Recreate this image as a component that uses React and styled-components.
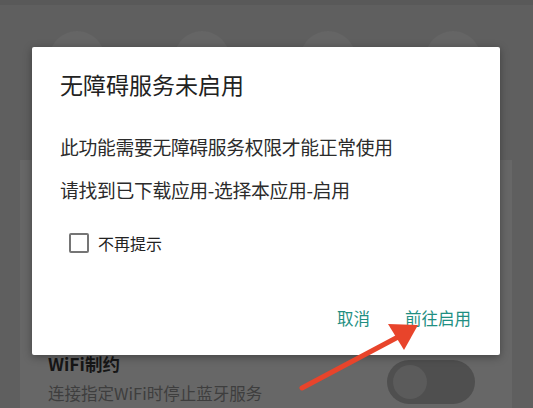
import React from "react";
import styled, { createGlobalStyle } from "styled-components";

const Global = createGlobalStyle`
  html, body { margin: 0; padding: 0; }
  body {
    width: 533px;
    height: 408px;
    overflow: hidden;
    background: #5e5e5e;
    font-family: "Noto Sans CJK SC", "Noto Sans", sans-serif;
  }
`;

const Screen = styled.div`
  position: relative;
  width: 533px;
  height: 408px;
  overflow: hidden;
  background: #5f5f5f;
  display: flex;
  flex-direction: column;
`;

const StatusStrip = styled.div`
  height: 5px;
  background: #595959;
  flex-shrink: 0;
`;

const IconRow = styled.div`
  display: flex;
  justify-content: space-between;
  padding: 26px 52px 0 49px;
  height: 129px;
  flex-shrink: 0;
`;

const FaintCircle = styled.div`
  width: 56px;
  height: 56px;
  border-radius: 50%;
  background: #656565;
`;

const Card = styled.div`
  margin: 0 21px 0 20px;
  flex: 1;
  background: #676767;
  display: flex;
  flex-direction: column;
  justify-content: flex-end;
`;

const SettingRow = styled.div`
  display: flex;
  align-items: center;
  justify-content: space-between;
  padding: 0 37px 5px 28px;
`;

const SettingText = styled.div`
  display: flex;
  flex-direction: column;
  gap: 9px;
`;

const SettingTitle = styled.div`
  font-size: 17.5px;
  line-height: 20px;
  font-weight: 700;
  color: #161616;
`;

const SettingSub = styled.div`
  font-size: 16.5px;
  line-height: 20px;
  color: #3e3e3e;
`;

const Track = styled.div`
  width: 88px;
  height: 44px;
  border-radius: 22px;
  background: #4f4f4f;
  display: flex;
  align-items: center;
  padding-left: 6px;
  box-sizing: border-box;
  margin-bottom: -7px;
`;

const Knob = styled.div`
  width: 34px;
  height: 34px;
  border-radius: 50%;
  background: #5b5b5b;
`;

const Dialog = styled.div`
  position: absolute;
  left: 32px;
  top: 47px;
  width: 468px;
  height: 308px;
  background: #ffffff;
  border-radius: 2px;
  box-shadow: 0 2px 8px rgba(0, 0, 0, 0.35);
  box-sizing: border-box;
  padding: 23px 29px 0 28px;
  display: flex;
  flex-direction: column;
`;

const Title = styled.div`
  font-size: 23px;
  line-height: 28px;
  color: #222222;
`;

const Body = styled.div`
  margin-top: 37px;
  display: flex;
  flex-direction: column;
  gap: 19px;
`;

const Line = styled.div`
  font-size: 18.8px;
  line-height: 24px;
  color: #2b2b2b;
  white-space: nowrap;
  letter-spacing: -0.3px;
`;

const CheckRow = styled.label`
  margin-top: 31px;
  margin-left: 9px;
  display: flex;
  align-items: center;
  gap: 9px;
`;

const Box = styled.span`
  width: 20px;
  height: 20px;
  box-sizing: border-box;
  border: 2px solid #757575;
  border-radius: 2px;
`;

const CheckLabel = styled.span`
  font-size: 16px;
  line-height: 20px;
  color: #222222;
`;

const Actions = styled.div`
  margin-top: 53px;
  display: flex;
  justify-content: flex-end;
  gap: 35px;
`;

const Action = styled.span`
  font-size: 16.5px;
  line-height: 24px;
  color: #1f8f82;
`;

const Arrow = styled.svg`
  position: absolute;
  left: 0;
  top: 0;
  pointer-events: none;
`;

export default function App() {
  return (
    <>
      <Global />
      <Screen>
        <StatusStrip />
        <IconRow>
          <FaintCircle />
          <FaintCircle />
          <FaintCircle />
          <FaintCircle />
        </IconRow>
        <Card>
          <SettingRow>
            <SettingText>
              <SettingTitle>WiFi制约</SettingTitle>
              <SettingSub>连接指定WiFi时停止蓝牙服务</SettingSub>
            </SettingText>
            <Track>
              <Knob />
            </Track>
          </SettingRow>
        </Card>

        <Dialog>
          <Title>无障碍服务未启用</Title>
          <Body>
            <Line>此功能需要无障碍服务权限才能正常使用</Line>
            <Line>请找到已下载应用-选择本应用-启用</Line>
          </Body>
          <CheckRow>
            <Box />
            <CheckLabel>不再提示</CheckLabel>
          </CheckRow>
          <Actions>
            <Action>取消</Action>
            <Action>前往启用</Action>
          </Actions>
        </Dialog>

        <Arrow width="533" height="408" viewBox="0 0 533 408">
          <line x1="302" y1="388" x2="398" y2="337" stroke="#e8442b" strokeWidth="5" strokeLinecap="round" />
          <polygon points="418,325 388,324 404,350" fill="#e8442b" />
        </Arrow>
      </Screen>
    </>
  );
}
